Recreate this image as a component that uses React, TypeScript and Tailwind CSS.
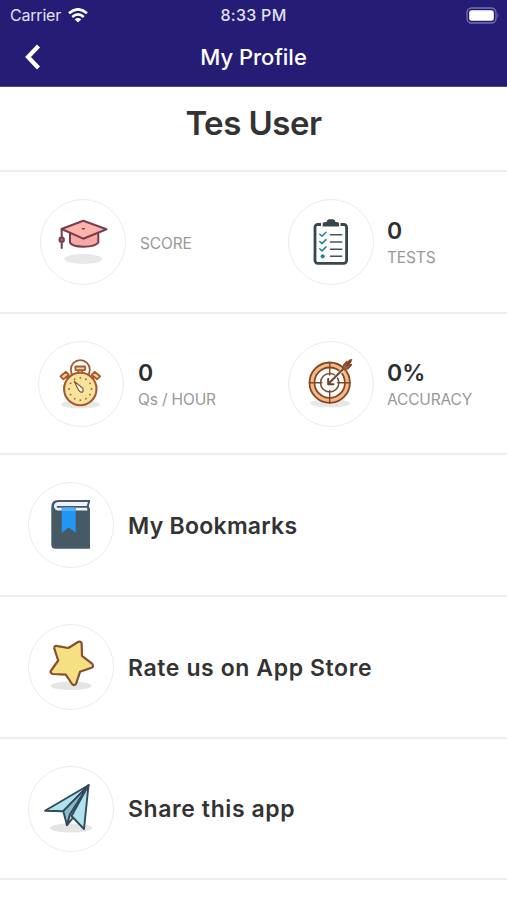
import React from 'react';

const Badge: React.FC<{ children: React.ReactNode }> = ({ children }) => (
  <div className="h-[86px] w-[86px] shrink-0 rounded-full border border-[#ebebeb] bg-white">
    <svg viewBox="1 1 84 84" className="h-full w-full" fill="none" strokeLinecap="round" strokeLinejoin="round">
      {children}
    </svg>
  </div>
);

const CapIcon = () => (
  <Badge>
    <ellipse cx="43.3" cy="60" rx="19" ry="5" fill="#e8e8e8" />
    <g stroke="#75404c" strokeWidth="2">
      <path d="M30 34V43.5C32.5 49 54.5 49 58.3 43.5V34" fill="#f7aaa5" />
      <path d="M21.5 30L43.3 21.7L66.5 30.3L43.3 39.7Z" fill="#ffb3ad" />
      <path d="M21.7 30V49" />
      <circle cx="21.7" cy="40.7" r="2.2" fill="#c4656b" />
      <path d="M42.5 29.8H44.3" strokeWidth="1.4" />
    </g>
  </Badge>
);

const ClipboardIcon = () => (
  <Badge>
    <rect x="27" y="25.5" width="31.6" height="38.8" rx="2.8" fill="#fff" stroke="#38474f" strokeWidth="2.8" />
    <path d="M33 23H52.5V28H33Z" fill="#fff" />
    <path d="M34.7 27.4V24.5Q34.7 23 37 23H38.5Q39 20.3 41 20.3H45Q47 20.3 47.5 23H49Q51 23 51 24.5V27.4Z" fill="#38474f" />
    <g stroke="#23868c" strokeWidth="1.5">
      <path d="M31.8 35.2L34 37.3L38 33.3" />
      <path d="M31.8 42.5L34 44.6L38 40.6" />
      <path d="M31.8 49.8L34 51.9L38 47.9" />
    </g>
    <circle cx="34.7" cy="57.3" r="2.1" fill="#23868c" />
    <path d="M42.5 35.7H53.7M42.5 43H53.7M42.5 50.2H53.7M42.5 57.3H53.7" stroke="#46535a" strokeWidth="1.6" />
  </Badge>
);

const StopwatchIcon = () => (
  <Badge>
    <ellipse cx="42.5" cy="63.5" rx="19.5" ry="4" fill="#e8e8e8" />
    <g stroke="#a6592f" strokeWidth="1.8">
      <circle cx="42.3" cy="28.7" r="9.5" />
      <g fill="#f2d58d">
        <path d="M40.3 29V33H44.3V29" />
        <rect x="37.4" y="25.5" width="9.8" height="3.6" rx=".5" />
        <path d="M28 34.5L31.5 38.5M56.6 34.5L53.1 38.5" strokeWidth="3" />
        <path d="M22.5 35.3L28 30.8L31 33.8L25.5 38.3Z" />
        <path d="M62.1 35.3L56.6 30.8L53.6 33.8L59.1 38.3Z" />
      </g>
      <circle cx="42.3" cy="48" r="16.2" fill="#f7e49c" strokeWidth="2.1" />
    </g>
    {/* Minute marks around the dial */}
    <g fill="#a6592f">
      {[0, 30, 60, 90, 120, 150, 180, 210, 240, 270, 300, 330].map((deg) => (
        <circle key={deg} cx="42.3" cy="36.8" r=".9" transform={`rotate(${deg} 42.3 48)`} />
      ))}
    </g>
    <path d="M36.2 40.2L44.8 47.3Q46 51.5 42.8 51.2Q41 50.6 39.4 47Z" fill="#fff" stroke="#8f542c" strokeWidth="1.2" />
  </Badge>
);

const TargetIcon = () => (
  <Badge>
    <ellipse cx="42" cy="62.3" rx="20" ry="4" fill="#e8e8e8" />
    <g stroke="#7f4a2c" strokeWidth="1.8">
      <circle cx="41.7" cy="41.7" r="20.2" fill="#fbb77d" />
      <circle cx="41.7" cy="41.7" r="15.2" fill="#fff" />
      <circle cx="41.7" cy="41.7" r="9.2" strokeWidth="1.5" />
      <path d="M21.5 41.7H34M49.5 41.7H62M41.7 21.5V34M41.7 49.5V62" strokeWidth="1.4" />
      <path d="M41 42.4L54 29.6" stroke="#fff" strokeWidth="3.4" />
      <path d="M40.5 42.8L62.5 20.8M40.2 38V43.2H45.5" stroke="#70402d" strokeWidth="2" />
      <path d="M54.8 28.5L55.5 23.8L59 20.2L59.2 24.2L63.3 24.4L59.8 28Z" fill="#9b5b3f" strokeWidth="1.1" />
      <path d="M58.5 24.7L60 20.8L62.4 18.8M59.2 24.2L63.5 23.3M61 21.7L63.7 18.7" strokeWidth="1.3" />
    </g>
  </Badge>
);

const BookIcon = () => (
  <Badge>
    <path d="M23.3 25Q23.3 18 30 18H62V20L60.8 24L62 27.6V66.7H27.3Q23.3 66.7 23.3 62.5Z" fill="#455a64" />
    <path d="M30 20H60L58.7 24L59.5 28.4H29.5Q25.9 27.5 25.9 24.3Q25.9 20.7 30 20Z" fill="#edf1ff" />
    <path d="M29.5 24.9H58.8" stroke="#455a64" strokeWidth="1.7" />
    <path d="M33.7 25.7H47.7V50.8L40.7 45.5L33.7 50.8Z" fill="#2196f3" />
    <path d="M33.7 25.7H47.7V29H33.7Z" fill="#55adff" />
  </Badge>
);

const StarIcon = () => (
  <Badge>
    <ellipse cx="43" cy="61.8" rx="20.5" ry="4.3" fill="#e5e5e5" />
    <path
      d="M40.3 24L50.5 17.8Q53.8 17 53.7 20.3L54 31.8L64 39.7Q66.5 43 62.8 44L52 47.8L48 60Q45.7 62.5 43.7 59.5L37.8 50.7L24.7 50Q21.2 48.8 23.4 46L30.2 36.5L26.3 24.5Q26.2 21.1 29.7 22.1Z"
      fill="#f5e084"
      stroke="#85502f"
      strokeWidth="2.2"
    />
  </Badge>
);

const PlaneIcon = () => (
  <Badge>
    <ellipse cx="43" cy="62" rx="21" ry="4.5" fill="#e5e5e5" />
    <g stroke="#344a5b" strokeWidth="1.9">
      <path d="M60.5 19.3L17 44.7L35.3 45.2Z" fill="#b1e3ec" />
      <path d="M60.5 19.3L35.3 45.2L39 59.2L42 48.5Z" fill="#83bcca" />
      <path d="M60.5 19.3L42 48.5L39 59.2L45.2 51.5Z" fill="#c6edf1" />
      <path d="M60.5 19.3L43.5 50L56 63Z" fill="#b1e3ec" />
    </g>
  </Badge>
);

const Stat = ({ value, label }: { value?: string; label: string }) => (
  <div className="flex flex-col pt-[4px]">
    {value && <span className="mb-[3px] text-[23px] leading-[26px] font-semibold text-[#2e2e2e]">{value}</span>}
    <span className="text-[15.5px] leading-[22px] tracking-[-0.15px] whitespace-nowrap text-[#999]">{label}</span>
  </div>
);

const links = [
  { label: 'My Bookmarks', icon: <BookIcon />, tracking: 'tracking-[0.27px]' },
  { label: 'Rate us on App Store', icon: <StarIcon />, tracking: 'tracking-[0.6px]' },
  { label: 'Share this app', icon: <PlaneIcon />, tracking: 'tracking-[0.6px]' },
];

const row = 'flex h-[141.7px] items-center border-b-2 border-[#eeeeee]';

export default function App() {
  return (
    <div className="h-[900px] w-[507px] overflow-hidden bg-white font-['Inter','Liberation_Sans',sans-serif]">
      <header className="h-[87px] border-b border-[#51498a] bg-[#251c75] text-white">
        {/* Status bar */}
        <div className="grid h-[30px] grid-cols-3 items-center px-[7px] text-[#e3e0f5]">
          <div className="flex items-center gap-[7px] pl-[3px]">
            <span className="text-[16px] tracking-[-0.2px]">Carrier</span>
            <svg viewBox="0 0 20 15" className="h-[15px] w-5" fill="none" stroke="#fff" strokeWidth="2.6">
              <path d="M1 5.3Q10-2.7 19 5.3M4.2 8.9Q10 3.8 15.8 8.9" />
              <path d="M10 14.5L6.7 11.3Q10 8.7 13.3 11.3Z" fill="#fff" stroke="none" />
            </svg>
          </div>
          <span className="text-center text-[16px] font-medium tracking-[0.3px] whitespace-nowrap">8:33 PM</span>
          <svg viewBox="0 0 34 17" className="h-[17px] w-[34px] justify-self-end">
            <rect x="1" y="1" width="29" height="15" rx="4.5" fill="none" stroke="#7770ad" strokeWidth="1.3" />
            <rect x="3.2" y="3.2" width="24.6" height="10.6" rx="2.3" fill="#fff" />
            <path d="M31.5 6Q33.5 8.5 31.5 11Z" fill="#7770ad" />
          </svg>
        </div>
        <div className="grid h-[54px] grid-cols-3 items-center px-[24px]">
          <svg viewBox="0 0 18 26" className="h-[26px] w-[18px]" fill="none" stroke="#fff" strokeWidth="4.2">
            <path d="M14.5 2L4 13L14.5 24" />
          </svg>
          <h1 className="text-center text-[22px] font-medium whitespace-nowrap">My Profile</h1>
        </div>
      </header>

      <main>
        <div className="flex h-[85px] items-center justify-center border-b-2 border-[#eeeeee] pb-[10px]">
          <h2 className="text-[33px] font-semibold tracking-[-0.5px] text-[#333]">Tes User</h2>
        </div>

        <div className={row}>
          <div className="flex w-[248px] items-center gap-[14px] pl-[40px]">
            <CapIcon />
            <Stat label="SCORE" />
          </div>
          <div className="flex items-center gap-[13px] pl-[40px]">
            <ClipboardIcon />
            <Stat value="0" label="TESTS" />
          </div>
        </div>
        <div className={row}>
          <div className="flex w-[248px] items-center gap-[14px] pl-[38px]">
            <StopwatchIcon />
            <Stat value="0" label="Qs / HOUR" />
          </div>
          <div className="flex items-center gap-[13px] pl-[40px]">
            <TargetIcon />
            <Stat value="0%" label="ACCURACY" />
          </div>
        </div>

        {links.map((link) => (
          <div key={link.label} className={`${row} gap-[14px] pl-[28px]`}>
            {link.icon}
            <span className={`pt-[2px] text-[23px] font-semibold text-[#333] ${link.tracking}`}>{link.label}</span>
          </div>
        ))}
      </main>
    </div>
  );
}
